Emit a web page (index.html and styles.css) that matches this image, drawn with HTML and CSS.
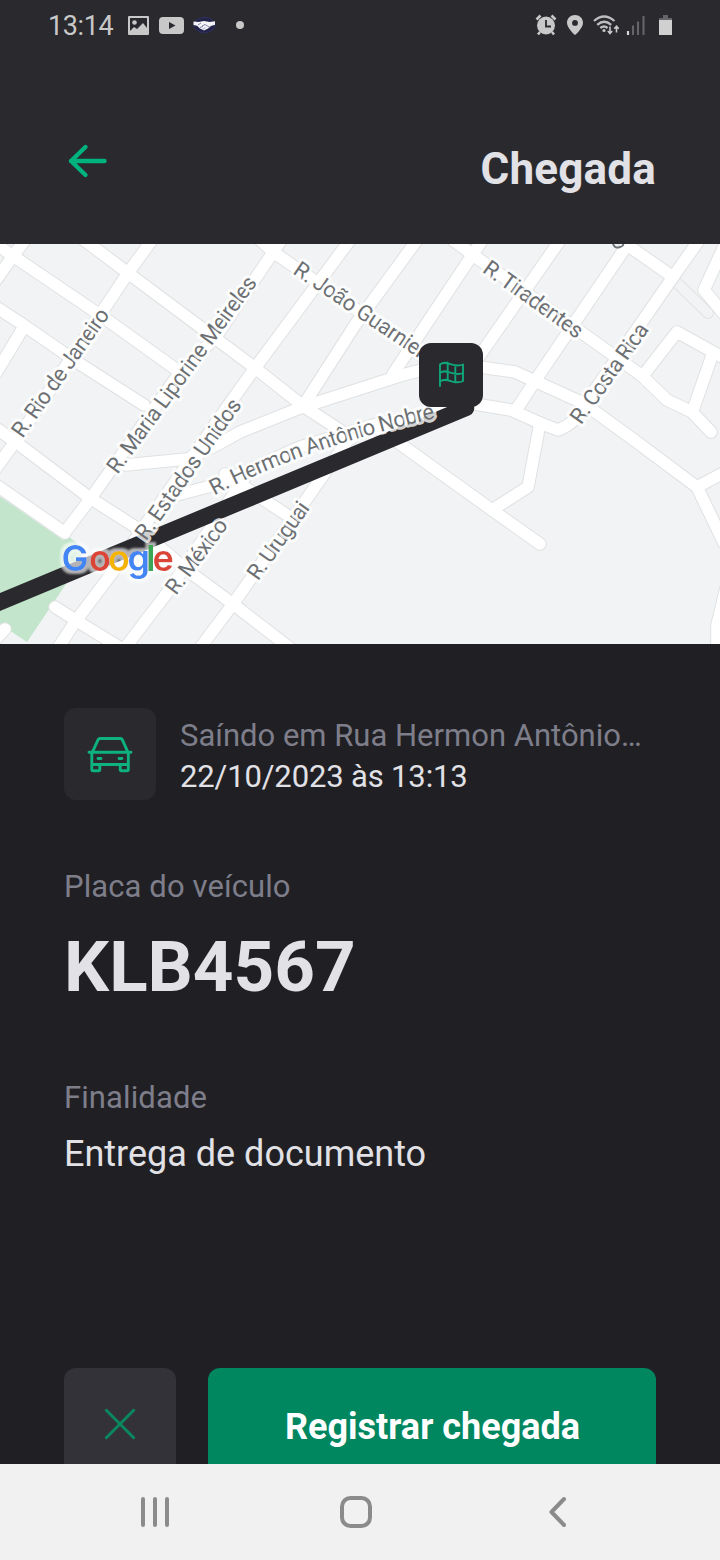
FILE: index.html
```html
<!DOCTYPE html>
<html lang="pt-BR">
<head>
<meta charset="utf-8">
<title>Chegada</title>
<link rel="stylesheet" href="styles.css">
</head>
<body>
<div class="screen">
  <div class="status">
    <div class="status-left">
      <span class="clock">13:14</span>
      <svg class="status-icons" width="130" height="30" viewBox="120 10 130 30">
        <path fill="#c8c8c8" fill-rule="evenodd" d="M129 16h19a1 1 0 0 1 1 1v17a1 1 0 0 1-1 1h-19a1 1 0 0 1-1-1v-17a1 1 0 0 1 1-1zM130 18v13l4-4 3 2 6-6 4 5v-10z"/>
        <circle cx="134.500" cy="22.500" r="2.300" fill="#c8c8c8"/>
        <rect x="159" y="17" width="25" height="17" rx="4" fill="#c8c8c8"/>
        <path d="M169 22v7l6.500-3.500z" fill="#29292e"/>
        <ellipse cx="204.500" cy="25" rx="10.500" ry="7.500" fill="#232347" stroke="#30306a"/>
        <path d="M193.500 21.500l5 .5 5.500-1 5.500 1 5.500-.8v3.500l-4 1.200-3 2.600-4 2-4-2-3-2.800-3.500-.8z" fill="#f4f4f8"/>
        <path d="M198 25l3-2m1 3 3-1.500 5 3M200 27.500l3-1m0 3 2-2" stroke="#55558a" stroke-width=".7" fill="none"/>
        <circle cx="240" cy="25" r="4" fill="#c8c8c8"/>
      </svg>
    </div>
    <svg class="status-icons" width="144" height="30" viewBox="533 10 144 30">
      <circle cx="546" cy="25.500" r="9" fill="#c8c8c8"/>
      <path d="M536.500 19.500l4-4M555.500 19.500l-4-4M540 32l-2 2.500M552 32l2 2.500" stroke="#c8c8c8" stroke-width="2.600"/>
      <path d="M546 20v6.500h5" fill="none" stroke="#29292e" stroke-width="1.800"/>
      <path fill="#c8c8c8" fill-rule="evenodd" d="M575 15c-4.500 0-8 3.300-8 7.700 0 5.600 8 12.300 8 12.300s8-6.700 8-12.300c0-4.400-3.500-7.700-8-7.700zm0 5a2.900 2.900 0 1 1 0 5.800 2.900 2.900 0 0 1 0-5.800z"/>
      <path d="M594 21q10-9 20.500 0M597.200 24.800q7-6 14 0M600.300 28q3.700-3 7.300 0" stroke="#bdbdbd" stroke-width="2.300" fill="none"/>
      <circle cx="604" cy="30.500" r="1.600" fill="#c8c8c8"/>
      <path d="M610 26.500v7M607.800 31l2.200 2.500 2.200-2.500M616.500 32.500v-6M614.300 28.800l2.200-2.500 2.200 2.500" stroke="#c8c8c8" stroke-width="1.600" fill="none"/>
      <path d="M628 35v-4" stroke="#d6d6d6" stroke-width="2.200"/>
      <path d="M633 35v-9.500M638 35v-13.500M643.500 35v-19" stroke="#656569" stroke-width="2.100"/>
      <path d="M663 15h5v3h4v2h-13v-2h4z" fill="#656569"/>
      <rect x="659" y="20" width="13" height="15" fill="#d0d0d0"/>
    </svg>
  </div>

  <header class="header">
    <svg class="back" width="48" height="48" viewBox="64 137 48 48"><path d="M104.500 161H71M85.500 147L71 161l14.500 14" fill="none" stroke="#00b37e" stroke-width="4.400" stroke-linecap="round" stroke-linejoin="round"/></svg>
    <h1 class="title">Chegada</h1>
  </header>

  <svg class="map" width="720" height="400" viewBox="0 244 720 400">
    <defs>
      <g id="roads">
        <path d="M-4 244L13 256L103 317L177 370"/>
        <path d="M80 237L128 273L215 338L255 368L303 406L352 438"/>
        <path d="M-4 307L22 324L77 362L144 405"/>
        <path d="M-4 428L17 443L90 498L137 528L187 570L233 604L290 648"/>
        <path d="M-4 485L65 533"/>
        <path d="M65 532L91 498L120 457L180 372L215 338L272 254L284 236"/>
        <path d="M258 238L273 252L350 305L430 362"/>
        <path d="M450 238L480 260L585 335L641 375L667 400L692 412L711 432"/>
        <path d="M618 236L633 249L673 277"/>
        <path d="M28 236L13 256L-4 280"/>
        <path d="M155 236L128 273L20 435L-4 468"/>
        <path d="M22 330L-4 373"/>
        <path d="M353 236L255 368L225 410L150 518L115 569L75 622L58 648"/>
        <path d="M420 236L355 325L303 406"/>
        <path d="M485 236L393 374"/>
        <path d="M563 236L478 358"/>
        <path d="M632 238L537 378L516 410"/>
        <path d="M702 236L673 277L583 407Q576 423 558 430L540 423L511 410L475 404"/>
        <path d="M727 240L704 290L724 314"/>
        <path d="M645 373L677 332L724 358M713 353L693 410"/>
        <path d="M125 465L187 459Q205 452 240 432L300 408L387 380Q420 369 440 367L480 367L515 372L583 403L630 437L697 487L725 472"/>
        <path d="M697 487L724 543"/>
        <path d="M728 580L717 625V650"/>
        <path d="M540 423L528 487L492 510"/>
        <path d="M165 498L215 485L300 447L377 424L475 404"/>
        <path d="M375 427L403 446L492 510L540 544"/>
        <path d="M225 474L290 517"/>
        <path d="M350 437L233 604L200 648"/>
        <path d="M250 470L167 593L125 648"/>
        <path d="M55 607L77 621L124 650"/>
        <path d="M5 629L-7 642"/>
      </g>
      <path id="nobre" d="M214.500 495.500Q300 449 440 417"/>
      <filter id="halo" x="-15%" y="-30%" width="130%" height="160%">
        <feMorphology in="SourceAlpha" operator="dilate" radius="3" result="grown"/>
        <feGaussianBlur in="grown" stdDeviation=".8" result="soft"/>
        <feFlood flood-color="#fff" flood-opacity=".65"/>
        <feComposite in2="soft" operator="in" result="glow"/>
        <feMerge><feMergeNode in="glow"/><feMergeNode in="SourceGraphic"/></feMerge>
      </filter>
    </defs>
    <rect y="244" width="720" height="400" fill="#f1f3f4"/>
    <path d="M-2 495L63 540L69 537L85 549L66 584L27 642L9 630L-2 622z" fill="#c2e5cb"/>
    <path d="M674 280L708 313" class="lane-edge"/>
    <path d="M674 280L708 313" class="lane"/>
    <use href="#roads" class="road-edge"/>
    <use href="#roads" class="road"/>
    <path d="M-10 606.200L466 408" class="route"/>
    <g class="street">
      <text transform="translate(22.500 439) rotate(-54.800)" textLength="152">R. Rio de Janeiro</text>
      <text transform="translate(117.500 475) rotate(-53.900)" textLength="238">R. Maria Liporine Meireles</text>
      <text transform="translate(146 541.500) rotate(-54.800)" textLength="167">R. Estados Unidos</text>
      <text textLength="235"><textPath href="#nobre">R. Hermon Antônio Nobre</textPath></text>
      <text transform="translate(176 596) rotate(-53.200)" textLength="88">R. México</text>
      <text transform="translate(258 581.500) rotate(-54.500)" textLength="90">R. Uruguai</text>
      <text transform="translate(292 273) rotate(34)" textLength="160">R. João Guarnieri</text>
      <text transform="translate(481.500 271.500) rotate(35.400)" textLength="117">R. Tiradentes</text>
      <text transform="translate(581 425.500) rotate(-54.500)" textLength="118">R. Costa Rica</text>
    </g>
    <path d="M613 244q2 5 7 3 4-1 3-4" fill="none" stroke="#707477" stroke-width="2"/>
    <text class="google" y="571" filter="url(#halo)"><tspan x="61.500" fill="#4285f4">G</tspan><tspan x="89" fill="#db4437">o</tspan><tspan x="108" fill="#f4b400">o</tspan><tspan x="127.500" fill="#4285f4">g</tspan><tspan x="146" fill="#3aa757">l</tspan><tspan x="152.500" fill="#db4437">e</tspan></text>
    <rect x="419" y="343" width="64" height="64" rx="12" fill="#29292e"/>
    <path d="M440 386V364.500C447 359 453 369 463 364.500V381C453 386 448 376 440 381.500M440 373C447 367.500 453 377.500 463 373M447.700 362.500V379.500M455.300 365.500V382.500" fill="none" stroke="#0fa67a" stroke-width="1.900" stroke-linecap="round" stroke-linejoin="round"/>
  </svg>

  <main class="content">
    <section class="departure">
      <div class="car-box">
        <svg width="48" height="48" viewBox="86 730 48 48" fill="none" stroke="#0db27f" stroke-width="2.900" stroke-linecap="round" stroke-linejoin="round"><path d="M89 752.300H131M92.300 752.300L98 739.800Q98.600 738.500 100 738.500H120.500Q121.800 738.500 122.400 739.800L128 752.300M91.800 752.300V769.500Q91.800 770.800 93.100 770.800H98.500Q99.800 770.800 99.800 769.500V764.500M120.200 764.500V769.500Q120.200 770.800 121.500 770.800H127Q128.300 770.800 128.300 769.500V752.300M91.800 764.500H128.300M98 758.500H101M119 758.500H122"/></svg>
      </div>
      <div class="departure-text">
        <p class="muted origin">Saíndo em Rua Hermon Antônio…</p>
        <p class="when">22/10/2023 às 13:13</p>
      </div>
    </section>
    <p class="muted label">Placa do veículo</p>
    <p class="plate">KLB4567</p>
    <p class="muted label purpose-label">Finalidade</p>
    <p class="purpose">Entrega de documento</p>
    <div class="actions">
      <div class="cancel"><svg width="32" height="32" viewBox="0 0 32 32"><path d="M2.300 2.300L29.700 29.700M29.700 2.300L2.300 29.700" stroke="#0b875f" stroke-width="3" stroke-linecap="round"/></svg></div>
      <div class="register">Registrar chegada</div>
    </div>
  </main>

  <nav class="navbar">
    <svg width="720" height="96" viewBox="0 1464 720 96" fill="none" stroke="#8b8b8b" stroke-width="4" stroke-linecap="round" stroke-linejoin="round"><path d="M143 1499v26M155 1499v26M167 1499v26M564 1499l-12.500 13 12.500 13"/><rect x="342" y="1498" width="28" height="28" rx="8.500"/></svg>
  </nav>
</div>
</body>
</html>
```
FILE: styles.css
```css
* { box-sizing: border-box; }
body { margin: 0; background: #202024; }
p, h1 { margin: 0; }
.screen {
  width: 720px;
  height: 1560px;
  display: flex;
  flex-direction: column;
  overflow: hidden;
  background: #202024;
  font-family: Roboto, "Liberation Sans", sans-serif;
  color: #e1e1e6;
}
svg { display: block; flex: none; }
.status {
  height: 50px;
  flex: none;
  padding: 0 43px 0 48px;
  display: flex;
  justify-content: space-between;
  align-items: center;
  background: #29292e;
}
.status-left { display: flex; align-items: center; }
.clock {
  width: 72px;
  font-size: 27px;
  letter-spacing: -.4px;
  line-height: 30px;
  padding-top: 2px;
  color: #c8c8c8;
  white-space: nowrap;
}
.header {
  height: 194px;
  flex: none;
  padding: 87px 64px 0;
  display: flex;
  justify-content: space-between;
  align-items: flex-start;
  background: #29292e;
}
.title { font-size: 44px; letter-spacing: .2px; line-height: 52px; margin-top: 6px; font-weight: 700; }
.lane-edge { fill: none; stroke: #e1e3e5; stroke-width: 12; stroke-linecap: round; }
.lane { fill: none; stroke: #f1f3f4; stroke-width: 10; stroke-linecap: round; }
.road-edge { fill: none; stroke: #dfe1e3; stroke-width: 13.500; stroke-linecap: round; stroke-linejoin: round; }
.road { fill: none; stroke: #fff; stroke-width: 11.500; stroke-linecap: round; stroke-linejoin: round; }
.route { fill: none; stroke: #29292e; stroke-width: 16.500; stroke-linecap: round; }
.street {
  font-size: 22px;
  fill: #6c7073;
  stroke: rgba(255, 255, 255, .8);
  stroke-width: 6px;
  stroke-linejoin: round;
  paint-order: stroke;
}
.google { font-family: Inter, Roboto, sans-serif; font-size: 36px; font-weight: 600; }
.content { height: 820px; flex: none; padding: 64px 64px 0; overflow: hidden; }
.departure { display: flex; gap: 24px; height: 92px; }
.car-box {
  width: 92px;
  height: 92px;
  flex: none;
  border-radius: 12px;
  background: #29292e;
  display: flex;
  align-items: center;
  justify-content: center;
}
.departure-text { padding-top: 7px; white-space: nowrap; }
.muted { color: #7e7e8b; }
.origin, .when { font-size: 31px; line-height: 41px; }
.when { letter-spacing: -.15px; }
.label { font-size: 31px; letter-spacing: .1px; line-height: 38px; margin-top: 68px; }
.plate { font-size: 71px; line-height: 84px; margin-top: 19px; font-weight: 700; }
.purpose-label { margin-top: 70px; }
.purpose { font-size: 36px; line-height: 42px; margin-top: 16px; }
.actions { display: flex; gap: 32px; margin-top: 193px; }
.cancel, .register {
  height: 112px;
  border-radius: 12px;
  display: flex;
  align-items: center;
  justify-content: center;
}
.cancel { width: 112px; background: #323238; }
.register { flex: 1; background: #00875f; color: #fff; font-size: 36px; font-weight: 700; padding: 5px 0 0 1px; }
.navbar { height: 96px; flex: none; background: #f1f1f1; }
```
